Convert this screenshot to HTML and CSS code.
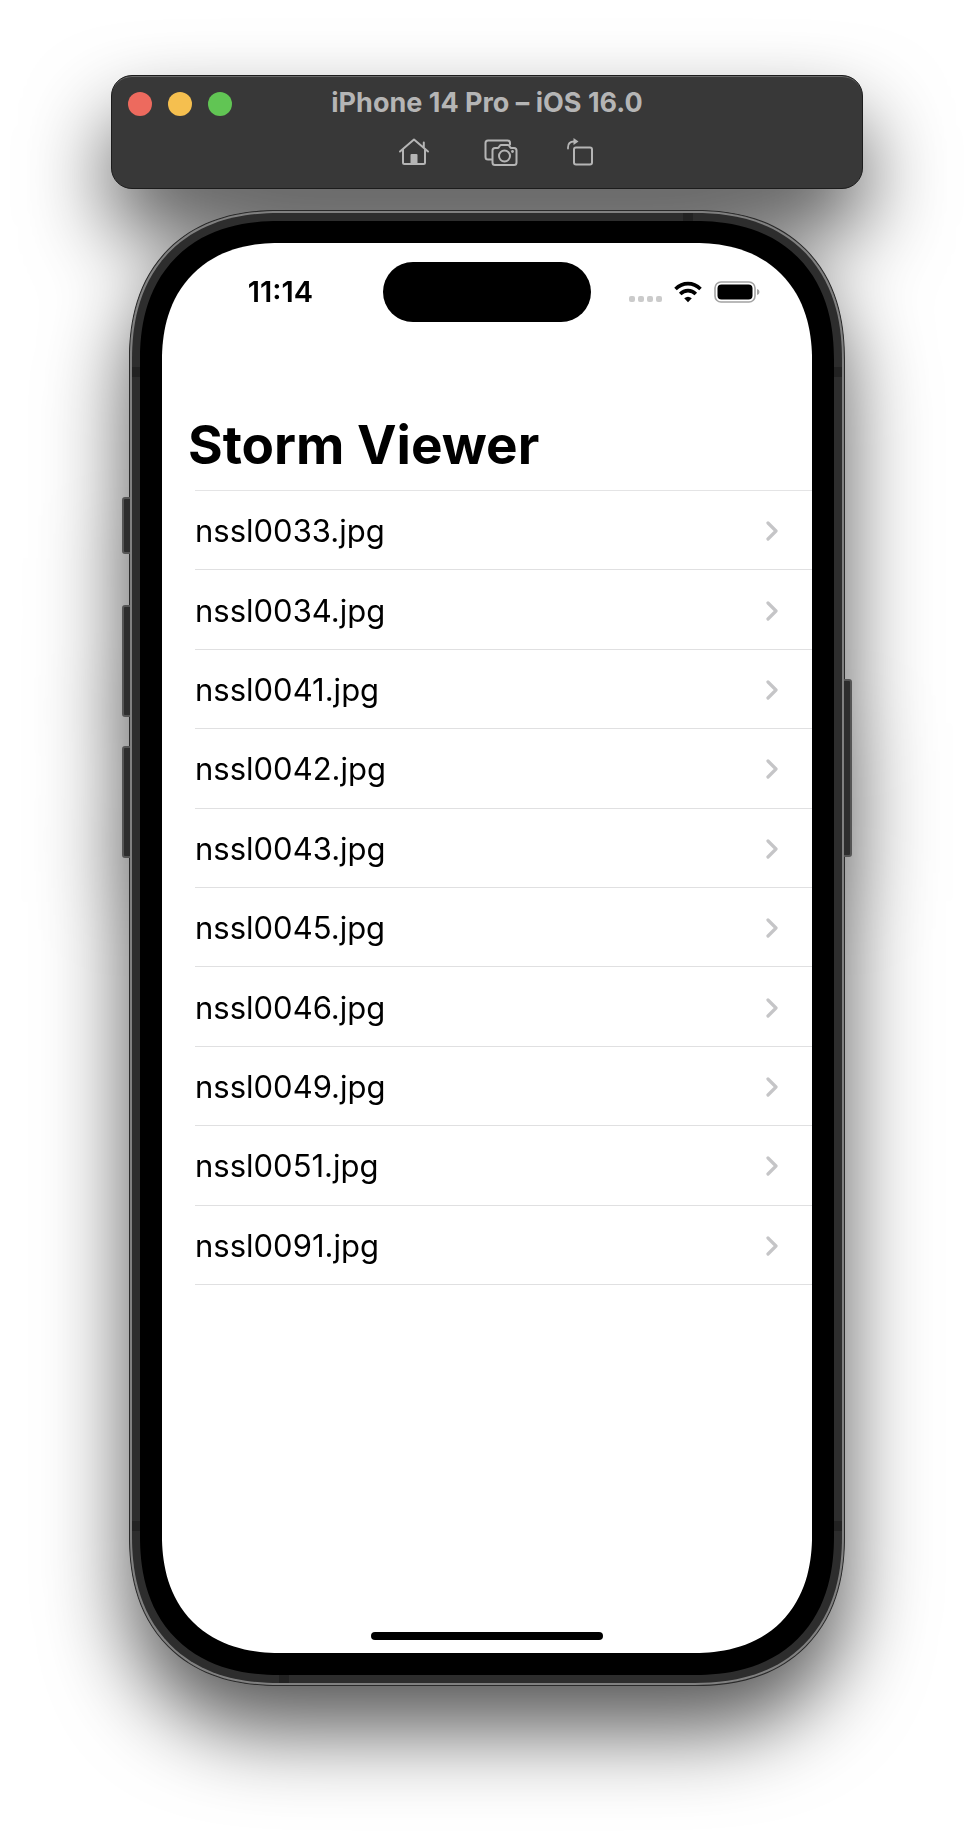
FILE: index.html
```html
<!DOCTYPE html>
<html lang="en">
<head>
<meta charset="utf-8">
<meta name="viewport" content="width=device-width, initial-scale=1">
<title>iPhone 14 Pro – iOS 16.0</title>
<link rel="stylesheet" href="styles.css">
</head>
<body>
<svg width="0" height="0" class="symbols" aria-hidden="true"><symbol id="chevron" viewBox="0 0 12 20"><path d="M2 2L10 10L2 18" fill="none" stroke="currentColor" stroke-width="3.200" stroke-linecap="round" stroke-linejoin="round"/></symbol></svg>
<div class="simulator">
  <header class="toolbar">
    <div class="toolbar-top">
      <div class="lights">
        <button class="light light-close" aria-label="Close"></button>
        <button class="light light-minimize" aria-label="Minimize"></button>
        <button class="light light-zoom" aria-label="Zoom"></button>
      </div>
      <div class="toolbar-title">iPhone 14 Pro – iOS 16.0</div>
    </div>
    <div class="toolbar-actions">
      <button class="tool" aria-label="Home">
        <svg width="32" height="30" viewBox="0 0 32 30" fill="none" stroke="currentColor" stroke-width="2" stroke-linecap="round" stroke-linejoin="round"><path d="M2 14.500L16 2.500L30 14.500M5 12.500V25.500Q5 27 6.500 27H25.500Q27 27 27 25.500V12.500M25.800 10.500V5.500"/><path d="M12.500 27V18Q12.500 17 13.500 17H18.500Q19.500 17 19.500 18V27Z" fill="currentColor" stroke="none"/></svg>
      </button>
      <button class="tool" aria-label="Screenshot">
        <svg width="34" height="30" viewBox="0 0 34 30" fill="none" stroke="currentColor" stroke-width="2" stroke-linecap="round" stroke-linejoin="round"><path d="M7.500 22.500H4Q1.500 22.500 1.500 20V6Q1.500 3.500 4 3.500H23.500Q26 3.500 26 6V7.500"/><path d="M11 11H13.500Q14.500 11 15 10L15.800 8.800Q16.300 8 17.300 8H23.700Q24.700 8 25.200 8.800L26 10Q26.500 11 27.500 11H30Q32.500 11 32.500 13.500V25.500Q32.500 28 30 28H11Q8.500 28 8.500 25.500V13.500Q8.500 11 11 11Z"/><circle cx="20.500" cy="19" r="5.500"/><circle cx="28.500" cy="14.500" r="1.400" fill="currentColor" stroke="none"/></svg>
      </button>
      <button class="tool" aria-label="Rotate">
        <svg width="28" height="30" viewBox="0 0 28 30" fill="none" stroke="currentColor" stroke-width="2" stroke-linecap="round"><rect x="8" y="10.500" width="18" height="17" rx="2"/><path d="M2 11.500V10.500Q2 4.500 8 4.500" stroke-width="1.800"/><path d="M7.500 1L12.500 4.500L7.500 8Z" fill="currentColor" stroke="none"/></svg>
      </button>
    </div>
  </header>

  <div class="phone">
    <span class="side-button side-silent"></span>
    <span class="side-button side-up"></span>
    <span class="side-button side-down"></span>
    <span class="side-button side-power"></span>
    <div class="rim">
      <div class="frame">
        <span class="antenna antenna-top"></span>
        <span class="antenna antenna-bottom"></span>
        <span class="antenna antenna-left-upper"></span>
        <span class="antenna antenna-left-lower"></span>
        <span class="antenna antenna-right-upper"></span>
        <span class="antenna antenna-right-lower"></span>
        <main class="screen">
          <div class="status">
            <time class="clock">11:14</time>
            <div class="island"></div>
            <div class="indicators">
              <svg width="33" height="22" viewBox="0 0 33 22" fill="#cbcbcb"><rect x="0" y="15" width="6" height="6" rx="2"/><rect x="9" y="15" width="6" height="6" rx="2"/><rect x="18" y="15" width="6" height="6" rx="2"/><rect x="27" y="15" width="6" height="6" rx="2"/></svg>
              <svg width="28" height="22" viewBox="0 0 28 22" fill="none" stroke="#000" stroke-width="3.600"><path d="M1.500 8Q7 2.600 14 2.600T26.500 8"/><path d="M6.200 12.900Q9.500 9.600 14 9.600T21.800 12.900"/><path d="M10.200 17.200Q14 14.200 17.800 17.200L14 21.200Z" fill="#000" stroke="none"/></svg>
              <svg width="46" height="22" viewBox="0 0 46 22"><rect x="1" y="1" width="40" height="20" rx="6" fill="none" stroke="#a3a3a3" stroke-width="1.600"/><rect x="3.500" y="3.500" width="35" height="15" rx="4" fill="#000"/><path d="M43 8Q45.500 8.500 45.500 11T43 14Z" fill="#a3a3a3"/></svg>
            </div>
          </div>
          <h1 class="title">Storm Viewer</h1>
          <ul class="files">
            <li class="file"><a class="file-link" href="#nssl0033">nssl0033.jpg<svg class="chevron" width="12" height="20"><use href="#chevron"/></svg></a></li>
            <li class="file"><a class="file-link" href="#nssl0034">nssl0034.jpg<svg class="chevron" width="12" height="20"><use href="#chevron"/></svg></a></li>
            <li class="file"><a class="file-link" href="#nssl0041">nssl0041.jpg<svg class="chevron" width="12" height="20"><use href="#chevron"/></svg></a></li>
            <li class="file"><a class="file-link" href="#nssl0042">nssl0042.jpg<svg class="chevron" width="12" height="20"><use href="#chevron"/></svg></a></li>
            <li class="file"><a class="file-link" href="#nssl0043">nssl0043.jpg<svg class="chevron" width="12" height="20"><use href="#chevron"/></svg></a></li>
            <li class="file"><a class="file-link" href="#nssl0045">nssl0045.jpg<svg class="chevron" width="12" height="20"><use href="#chevron"/></svg></a></li>
            <li class="file"><a class="file-link" href="#nssl0046">nssl0046.jpg<svg class="chevron" width="12" height="20"><use href="#chevron"/></svg></a></li>
            <li class="file"><a class="file-link" href="#nssl0049">nssl0049.jpg<svg class="chevron" width="12" height="20"><use href="#chevron"/></svg></a></li>
            <li class="file"><a class="file-link" href="#nssl0051">nssl0051.jpg<svg class="chevron" width="12" height="20"><use href="#chevron"/></svg></a></li>
            <li class="file"><a class="file-link" href="#nssl0091">nssl0091.jpg<svg class="chevron" width="12" height="20"><use href="#chevron"/></svg></a></li>
          </ul>
          <div class="home-indicator"></div>
        </main>
      </div>
    </div>
  </div>
</div>
</body>
</html>
```
FILE: styles.css
```css
* { box-sizing: border-box; }

body {
  margin: 0;
  background: #fff;
  color: #000;
  font-family: Inter, "Liberation Sans", sans-serif;
}

button {
  margin: 0;
  padding: 0;
  border: 0;
  background: none;
  color: inherit;
  font: inherit;
}

svg { display: block; }

.symbols { position: absolute; }

.simulator {
  padding: 75px 111px 150px;
  filter: drop-shadow(0 44px 42px rgba(0, 0, 0, 0.66));
}

/* Simulator window bar */
.toolbar {
  padding: 11px 16px 21px;
  border: 1px solid #1c1c1c;
  border-radius: 21px;
  background: #383838;
  box-shadow: inset 0 2px 0 -1px #6a6a6a;
  color: #b5b5b5;
}

.toolbar-top {
  display: grid;
  grid-template-columns: 1fr auto 1fr;
  align-items: center;
}

.lights { display: flex; gap: 16px; padding-top: 2px; }

.light { width: 24px; height: 24px; border-radius: 50%; }
.light-close { background: #ed6a5e; }
.light-minimize { background: #f5bf4f; }
.light-zoom { background: #61c554; }

.toolbar-title {
  font-size: 27px;
  font-weight: 700;
  line-height: 32px;
}

.toolbar-actions {
  display: flex;
  justify-content: center;
  gap: 54px;
  padding: 18px 0 0 18px;
}

.tool:last-child { margin-left: -6px; }

/* Device body */
.phone {
  position: relative;
  margin: 21px 18px 0;
  border: 1px solid #2a2a2a;
  border-radius: 126px;
  background: #2a2a2a;
}

.rim {
  position: relative;
  padding: 2px;
  border-radius: 125px;
  background: #808080;
}

.frame {
  position: relative;
  padding: 8px;
  border-radius: 123px;
  background: #2d2d2d;
}

.side-button {
  position: absolute;
  left: -8px;
  width: 12px;
  border: 2px solid #555;
  border-radius: 3px;
  background: #2d2d2d;
}

.side-silent { top: 286px; height: 57px; }
.side-up { top: 394px; height: 112px; }
.side-down { top: 535px; height: 112px; }
.side-power { top: 468px; right: -8px; left: auto; height: 178px; }

.antenna { position: absolute; background: #222; }
.antenna-top { top: 0; right: 149px; width: 10px; height: 8px; }
.antenna-bottom { bottom: 0; left: 147px; width: 10px; height: 8px; }
.antenna-left-upper { top: 154px; left: 0; width: 8px; height: 10px; }
.antenna-left-lower { bottom: 152px; left: 0; width: 8px; height: 10px; }
.antenna-right-upper { top: 154px; right: 0; width: 8px; height: 10px; }
.antenna-right-lower { right: 0; bottom: 152px; width: 8px; height: 10px; }

.screen {
  position: relative;
  display: flex;
  flex-direction: column;
  border: 22px solid #000;
  border-radius: 115px;
  background: #fff;
}

/* Continuous corner curve */
@supports (corner-shape: superellipse(1.2)) {
  .phone, .rim, .frame, .screen { corner-shape: superellipse(1.2); }
  .phone { border-radius: 150px; }
  .rim { border-radius: 149px; }
  .frame { border-radius: 147px; }
  .screen { border-radius: 139px; }
}

/* Status bar */
.status {
  display: grid;
  grid-template-columns: 1fr auto 1fr;
  align-items: center;
  padding-top: 19px;
}

.clock {
  padding-left: 16px;
  font-size: 29px;
  font-weight: 600;
  line-height: 36px;
  text-align: center;
}

.island {
  width: 208px;
  height: 60px;
  border-radius: 30px;
  background: #000;
}

.indicators {
  display: flex;
  gap: 12px;
  padding-left: 38px;
}

/* File list */
.title {
  margin: 91px 0 0 26px;
  font-size: 53px;
  font-weight: 700;
  line-height: 64px;
}

.files {
  display: grid;
  grid-auto-rows: 1fr;
  height: 795px;
  margin: 13px 0 0 33px;
  padding: 0;
  border-top: 1px solid #e4e4e5;
  list-style: none;
}

.file { border-bottom: 1px solid #e0e0e1; }

.file-link {
  display: flex;
  align-items: center;
  justify-content: space-between;
  height: 100%;
  padding: 2px 34px 0 0;
  color: #000;
  font-size: 31px;
  line-height: 40px;
  text-decoration: none;
}

.chevron { color: #c5c5c7; }

.home-indicator {
  width: 232px;
  height: 8px;
  margin: 347px auto 13px;
  border-radius: 4px;
  background: #000;
}
```
